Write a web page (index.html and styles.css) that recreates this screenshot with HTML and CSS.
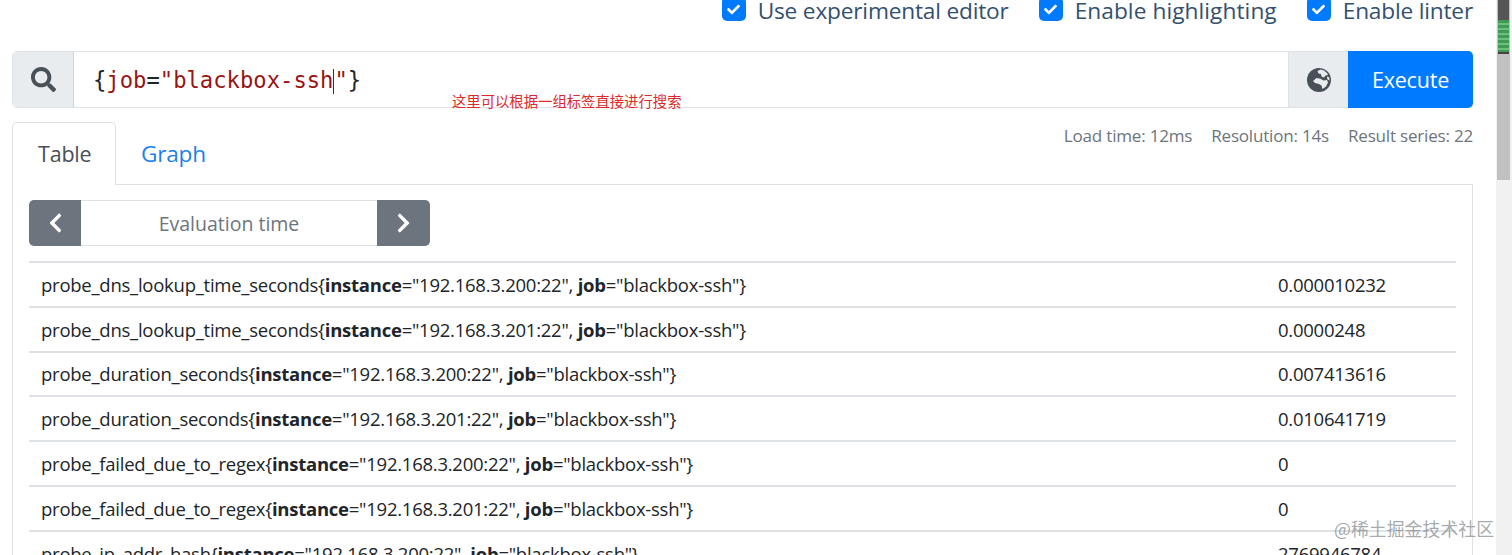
FILE: index.html
```html
<!DOCTYPE html>
<html lang="en">
<head>
<meta charset="utf-8">
<title>Prometheus</title>
<link rel="stylesheet" href="styles.css">
</head>
<body>
<div class="page">
  <main class="main">
    <div class="options">
      <label class="opt"><span class="box"><svg viewBox="0 0 512 512"><path d="M173.9 439.4L7.5 273c-10-10-10-26.200 0-36.200l36.200-36.200c10-10 26.200-10 36.200 0L192 312.700 432.100 72.600c10-10 26.200-10 36.200 0l36.200 36.200c10 10 10 26.200 0 36.200L210.100 439.400c-10 10-26.200 10-36.200 0z"/></svg></span>Use experimental editor</label>
      <label class="opt opt-wide"><span class="box"><svg viewBox="0 0 512 512"><path d="M173.9 439.4L7.5 273c-10-10-10-26.200 0-36.200l36.200-36.200c10-10 26.200-10 36.200 0L192 312.700 432.100 72.600c10-10 26.200-10 36.200 0l36.200 36.200c10 10 10 26.200 0 36.200L210.100 439.400c-10 10-26.200 10-36.200 0z"/></svg></span>Enable highlighting</label>
      <label class="opt"><span class="box"><svg viewBox="0 0 512 512"><path d="M173.9 439.4L7.5 273c-10-10-10-26.200 0-36.200l36.200-36.200c10-10 26.200-10 36.200 0L192 312.700 432.100 72.600c10-10 26.200-10 36.200 0l36.200 36.200c10 10 10 26.200 0 36.200L210.100 439.400c-10 10-26.200 10-36.200 0z"/></svg></span>Enable linter</label>
    </div>

    <div class="query">
      <div class="addon addon-search">
        <svg class="icon-search" viewBox="0 0 512 512"><path d="M505 442.700L405.300 343c-4.500-4.500-10.600-7-17-7H372c27.600-35.300 44-79.700 44-128C416 93.100 322.900 0 208 0S0 93.100 0 208s93.100 208 208 208c48.300 0 92.700-16.400 128-44v16.300c0 6.400 2.500 12.500 7 17l99.700 99.700c9.400 9.400 24.600 9.400 33.900 0l28.300-28.300c9.400-9.400 9.400-24.600.1-34zM208 336c-70.700 0-128-57.200-128-128 0-70.700 57.200-128 128-128 70.700 0 128 57.200 128 128 0 70.700-57.200 128-128 128z"/></svg>
      </div>
      <div class="editor"><span class="c-punct">{</span><span class="c-name">job</span><span class="c-punct">=</span><span class="c-str">"blackbox-ssh<span class="caret"></span>"</span><span class="c-punct">}</span></div>
      <div class="addon addon-globe">
        <svg class="icon-globe" viewBox="0 0 24 24"><circle cx="12" cy="12" r="12" fill="#495057"/><path fill="#e9ecef" d="M10.500 3l3-1.500 3.500 1 3 2.500 1 2-2.500.5-1.500 2-2.500-1-.5-2.500-2.500-.5zM6 13l3.500-3 4 .8 3 1.700 3.500-.5 1 2.500-2 4-3.500 2.500-1-3.500-2.500-1.500-4-1zM20 8.500l2.300 1 .2 3-2.200-1.200z"/></svg>
      </div>
      <button class="execute" type="button">Execute</button>
    </div>

    <div class="tabbar">
      <div class="tabs">
        <span class="tab tab-active">Table</span>
        <span class="tab">Graph</span>
      </div>
      <div class="stats">
        <span>Load time: 12ms</span>
        <span>Resolution: 14s</span>
        <span>Result series: 22</span>
      </div>
    </div>

    <section class="panel">
      <div class="evalbar">
        <button class="stepper stepper-l" type="button"><svg viewBox="0 0 320 512"><path d="M34.520 239.030L228.870 44.690c9.370-9.370 24.570-9.370 33.940 0l22.670 22.670c9.360 9.360 9.370 24.520.04 33.900L131.490 256l154.020 154.750c9.340 9.380 9.320 24.540-.04 33.900l-22.670 22.670c-9.370 9.370-24.570 9.370-33.940 0L34.520 272.970c-9.370-9.370-9.370-24.570 0-33.940z"/></svg></button>
        <div class="evalinput">Evaluation time</div>
        <button class="stepper stepper-r" type="button"><svg viewBox="0 0 320 512"><path d="M285.476 272.971L91.132 467.314c-9.373 9.373-24.569 9.373-33.941 0l-22.667-22.667c-9.357-9.357-9.375-24.522-.04-33.901L188.505 256 34.484 101.255c-9.335-9.379-9.317-24.544.04-33.901l22.667-22.667c9.373-9.373 24.569-9.373 33.941 0L285.475 239.030c9.373 9.372 9.373 24.568.001 33.941z"/></svg></button>
      </div>
      <table class="results">
        <tr><td>probe_dns_lookup_time_seconds{<b>instance</b>="192.168.3.200:22", <b>job</b>="blackbox-ssh"}</td><td>0.000010232</td></tr>
        <tr><td>probe_dns_lookup_time_seconds{<b>instance</b>="192.168.3.201:22", <b>job</b>="blackbox-ssh"}</td><td>0.0000248</td></tr>
        <tr><td>probe_duration_seconds{<b>instance</b>="192.168.3.200:22", <b>job</b>="blackbox-ssh"}</td><td>0.007413616</td></tr>
        <tr><td>probe_duration_seconds{<b>instance</b>="192.168.3.201:22", <b>job</b>="blackbox-ssh"}</td><td>0.010641719</td></tr>
        <tr><td>probe_failed_due_to_regex{<b>instance</b>="192.168.3.200:22", <b>job</b>="blackbox-ssh"}</td><td>0</td></tr>
        <tr><td>probe_failed_due_to_regex{<b>instance</b>="192.168.3.201:22", <b>job</b>="blackbox-ssh"}</td><td>0</td></tr>
        <tr><td>probe_ip_addr_hash{<b>instance</b>="192.168.3.200:22", <b>job</b>="blackbox-ssh"}</td><td>2769946784</td></tr>
      </table>
    </section>
  </main>

  <div class="scrollbar">
    <div class="thumb"><div class="thumb-dark"></div><div class="thumb-green"></div></div>
  </div>
</div>
<div class="note">这里可以根据一组标签直接进行搜索</div>
<div class="watermark">@稀土掘金技术社区</div>
</body>
</html>
```
FILE: styles.css
```css
* { box-sizing: border-box; }
html, body { margin: 0; height: 555px; overflow: hidden; background: #fff; }
body { font-family: "Open Sans", "Noto Sans CJK SC", sans-serif; color: #212529; position: relative; }

.page { display: flex; height: 555px; }
.main { flex: 1; min-width: 0; padding: 0 23px 0 12px; }

.options { height: 51px; display: flex; justify-content: flex-end; gap: 30px; font-size: 22.7px; color: #34506f; }
.opt { display: flex; align-items: flex-start; gap: 12px; height: 22px; line-height: 21px; letter-spacing: -.2px; }
.opt-wide { letter-spacing: .06px; }
.box { width: 24px; height: 24px; margin-top: -3px; border-radius: 5px; background: #007bff; display: flex; align-items: center; justify-content: center; }
.box svg { width: 13px; height: 13px; fill: #fff; }

.query { height: 57px; display: flex; border: 1px solid #dee2e6; border-radius: 5px; }
.addon { background: #e9ecef; display: flex; align-items: center; justify-content: center; }
.addon-search { width: 61px; border-right: 1px solid #ced4da; border-radius: 5px 0 0 5px; }
.icon-search { width: 25px; height: 25px; fill: #495057; }
.addon-globe { width: 60px; border-left: 1px solid #dee2e6; }
.icon-globe { width: 24px; height: 24px; }
.editor { flex: 1; padding-left: 19px; font: 22.2px/56px "DejaVu Sans Mono", monospace; }
.c-punct { color: #212529; }
.c-name { color: #981414; }
.c-str { color: #981414; }
.caret { display: inline-block; width: 0; height: 25px; border-left: 1px solid #333; vertical-align: -6px; }
.execute { width: 125px; margin: -1px -1px -1px 0; border: 0; border-radius: 0 5px 5px 0; background: #007bff; color: #fff; font: 21.5px "Open Sans", sans-serif; letter-spacing: -.2px; }

.tabbar { height: 77px; padding-top: 14px; display: flex; justify-content: space-between; }
.tabs { display: flex; font-size: 22.6px; letter-spacing: -.2px; }
.tab { height: 63px; padding: 0 25px; line-height: 64px; color: #1a7ff0; }
.tab-active { width: 104px; font-size: 21.5px; line-height: 62px; color: #495057; background: #fff; border: 1px solid #dee2e6; border-bottom: 0; border-radius: 5px 5px 0 0; position: relative; z-index: 1; }
.stats { display: flex; gap: 19px; font-size: 17.05px; line-height: 28px; color: #6c757d; letter-spacing: -.2px; }

.panel { height: 400px; margin-top: -1px; padding: 15px 16px 0; border: 1px solid #dee2e6; border-bottom: 0; overflow: hidden; }
.evalbar { display: flex; height: 46px; width: 401px; }
.stepper { width: 52px; border: 0; background: #6c757d; display: flex; align-items: center; justify-content: center; padding: 0; }
.stepper svg { width: 15px; height: 22px; fill: #fff; }
.stepper-l { border-radius: 5px 0 0 5px; }
.stepper-r { width: 53px; border-radius: 0 5px 5px 0; }
.evalinput { flex: 1; border-top: 1px solid #dee2e6; border-bottom: 1px solid #dee2e6; text-align: center; font-size: 19.5px; line-height: 46px; color: #6c757d; }

.results { width: 100%; margin-top: 15px; border-collapse: collapse; table-layout: fixed; font-size: 18.5px; letter-spacing: -.25px; }
.results td { height: 44.8px; padding: 0 12px; border-top: 2px solid #dee2e6; white-space: nowrap; }
.results td:last-child { width: 190px; }
.results b { font-weight: 700; }

.scrollbar { width: 16px; background: #f1f1f1; padding-left: 1px; }
.thumb { width: 13px; height: 180px; background: #c1c1c1; }
.thumb-dark { height: 20px; margin: 0 1px; background: #555; }
.thumb-green { height: 34px; margin: 0 1px; border-bottom: 2px solid #444; background: repeating-linear-gradient(#3f9a54 0 3px, #6cbf7f 3px 5px); }

.note { position: absolute; left: 452px; top: 92px; font-size: 14.35px; line-height: 18px; color: #dc2a2a; font-family: "Noto Sans CJK SC", sans-serif; }
.watermark { position: absolute; left: 1334px; top: 516px; font-size: 17.9px; line-height: 24px; color: rgba(110, 115, 120, .62); font-family: "Noto Sans CJK SC", sans-serif; }
```
